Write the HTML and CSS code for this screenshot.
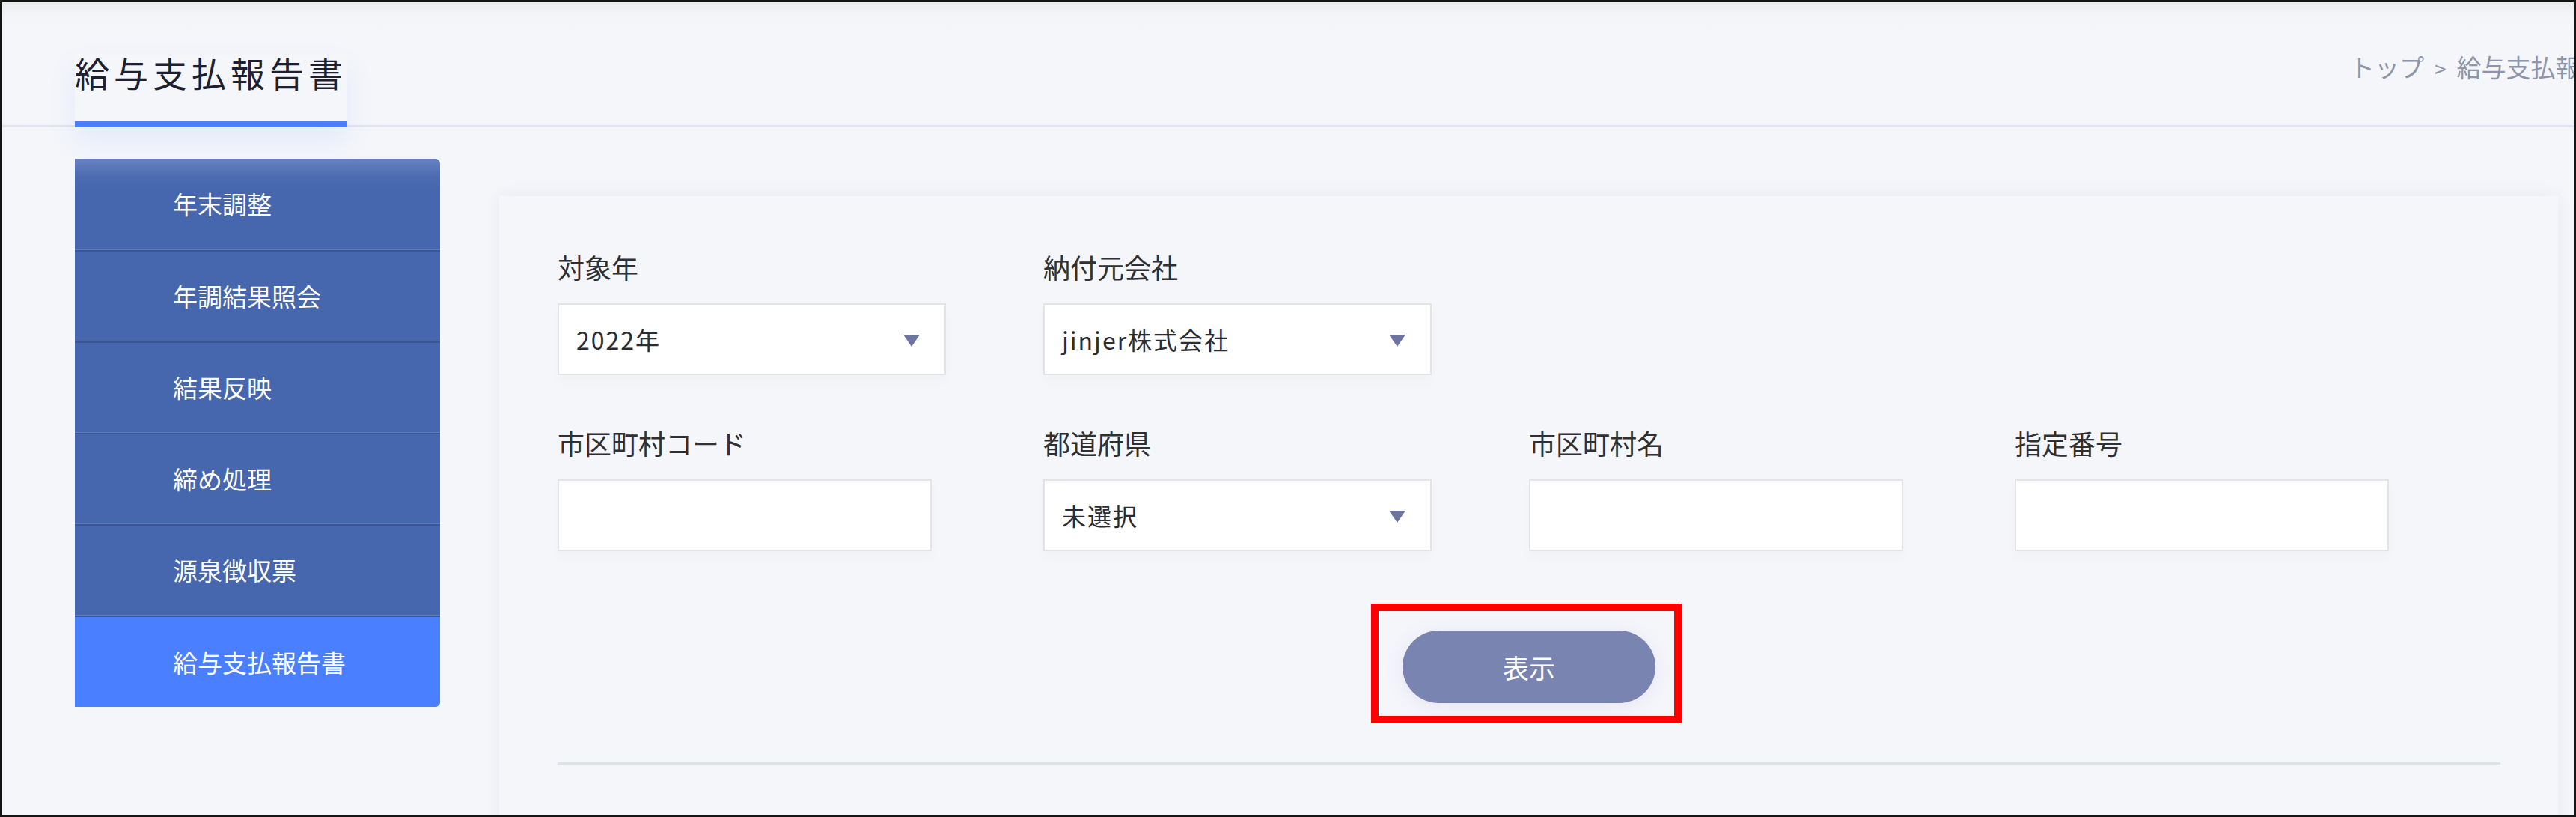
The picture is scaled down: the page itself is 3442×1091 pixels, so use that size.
FILE: index.html
```html
<!DOCTYPE html>
<html lang="ja">
<head>
<meta charset="utf-8">
<title>給与支払報告書</title>
<link rel="stylesheet" href="styles.css">
</head>
<body>
<div class="frame">
  <header class="page-head">
    <div class="title-tab"><h1 class="title">給与支払報告書</h1></div>
    <nav class="crumbs"><span>トップ</span><span class="sep">&gt;</span><span>給与支払報告書</span></nav>
  </header>
  <div class="main">
    <aside class="sidenav">
      <a class="nav-item">年末調整</a>
      <a class="nav-item">年調結果照会</a>
      <a class="nav-item">結果反映</a>
      <a class="nav-item">締め処理</a>
      <a class="nav-item">源泉徴収票</a>
      <a class="nav-item active">給与支払報告書</a>
    </aside>
    <section class="card">
      <div class="form-grid">
        <div class="field">
          <label class="label">対象年</label>
          <div class="select"><span class="select-text">2022年</span><i class="caret"></i></div>
        </div>
        <div class="field">
          <label class="label">納付元会社</label>
          <div class="select"><span class="select-text">jinjer株式会社</span><i class="caret"></i></div>
        </div>
        <div class="field first-col">
          <label class="label">市区町村コード</label>
          <div class="input"></div>
        </div>
        <div class="field">
          <label class="label">都道府県</label>
          <div class="select"><span class="select-text">未選択</span><i class="caret"></i></div>
        </div>
        <div class="field">
          <label class="label">市区町村名</label>
          <div class="input"></div>
        </div>
        <div class="field">
          <label class="label">指定番号</label>
          <div class="input"></div>
        </div>
      </div>
      <div class="actions">
        <div class="btn-wrap">
          <button class="btn">表示</button>
          <span class="highlight"></span>
        </div>
      </div>
      <div class="divider"></div>
    </section>
  </div>
</div>
</body>
</html>
```

FILE: styles.css
```css
html, body {
  margin: 0;
  padding: 0;
}

body {
  font-family: "Noto Sans CJK JP", "Noto Sans", sans-serif;
  background: #f5f6fa;
}

.frame {
  width: 3442px;
  height: 1091px;
  box-sizing: border-box;
  border: 3px solid #151515;
  overflow: hidden;
  background: #f5f6fa;
}

/* header */
.page-head {
  display: flex;
  align-items: flex-start;
  padding: 70px 0 0 97px;
  border-bottom: 3px solid #e2e5ed;
  background: linear-gradient(to bottom, #eaebef 0, #f4f5f9 18px, #f5f6fa 40px);
}

.title-tab {
  width: 364px;
  flex-shrink: 0;
  padding-bottom: 43px;
  border-bottom: 8px solid #4a80ff;
  margin-bottom: -3px;
  box-shadow: 0 18px 36px rgba(74, 128, 255, 0.10);
}

.title {
  margin: 0;
  font-size: 46px;
  line-height: 46px;
  font-weight: 400;
  letter-spacing: 6px;
  color: #1d2030;
  white-space: nowrap;
}

.crumbs {
  margin-left: 2676px;
  flex-shrink: 0;
  font-size: 33px;
  line-height: 33px;
  color: #8d95aa;
  white-space: nowrap;
}

.crumbs .sep {
  margin: 0 14px;
  font-size: 28px;
}

/* main area */
.main {
  display: flex;
  align-items: flex-start;
  gap: 79px;
  padding: 42px 21px 0 97px;
}

.sidenav {
  width: 488px;
  flex-shrink: 0;
  display: flex;
  flex-direction: column;
  border-radius: 0 7px 7px 0;
  overflow: hidden;
  background: #4666ad;
}

.nav-item {
  height: 122px;
  box-sizing: border-box;
  display: flex;
  align-items: center;
  padding-left: 131px;
  font-size: 33px;
  line-height: 33px;
  color: #ffffff;
  background: #4666ad;
  border-bottom: 1px solid #5a7cc6;
}

.nav-item:first-child {
  background: linear-gradient(to bottom, #6882c2 0, #4c6bb1 24px, #4666ad 44px);
}

.nav-item + .nav-item {
  border-top: 2px solid #3a5590;
}

.nav-item.active {
  background: #4a80ff;
  border-bottom: none;
}

/* card */
.card {
  flex: 1;
  margin-top: 50px;
  min-height: 900px;
  box-sizing: border-box;
  padding: 76px 77px 0 78px;
  background: #f5f6fa;
  box-shadow: 0 0 20px rgba(40, 50, 110, 0.07);
}

.form-grid {
  display: grid;
  grid-template-columns: repeat(4, 519px);
  column-gap: 130px;
  row-gap: 72px;
}

.first-col {
  grid-column: 1;
}

.label {
  display: block;
  font-size: 36px;
  line-height: 36px;
  color: #2f3033;
  margin-bottom: 31px;
}

.select,
.input {
  height: 96px;
  box-sizing: border-box;
  background: #ffffff;
  border: 2px solid #e4e4e8;
  box-shadow: 0 8px 14px rgba(0, 0, 0, 0.025);
}

.select {
  width: 519px;
  display: flex;
  align-items: center;
  justify-content: space-between;
  padding: 0 33px 0 23px;
}

.input {
  width: 500px;
}

.select-text {
  font-size: 32px;
  line-height: 32px;
  letter-spacing: 2px;
  color: #2b2c30;
}

.caret {
  width: 0;
  height: 0;
  border-left: 11px solid transparent;
  border-right: 11px solid transparent;
  border-top: 16px solid #6c74a1;
  margin-top: 4px;
}

/* actions */
.actions {
  display: flex;
  justify-content: center;
  margin-top: 106px;
}

.btn-wrap {
  position: relative;
}

.btn {
  display: block;
  width: 338px;
  height: 97px;
  border: none;
  border-radius: 49px;
  background: #7a84b0;
  color: #ffffff;
  font-family: "Noto Sans CJK JP", "Noto Sans", sans-serif;
  font-size: 35px;
  line-height: 35px;
  box-shadow: 0 4px 24px rgba(120, 100, 220, 0.12);
  padding: 0;
}

.highlight {
  position: absolute;
  top: -36px;
  right: -35px;
  bottom: -27px;
  left: -42px;
  border: 10px solid #ff0000;
  pointer-events: none;
}

.divider {
  margin-top: 79px;
  border-top: 3px solid #e0e2e9;
}
```
